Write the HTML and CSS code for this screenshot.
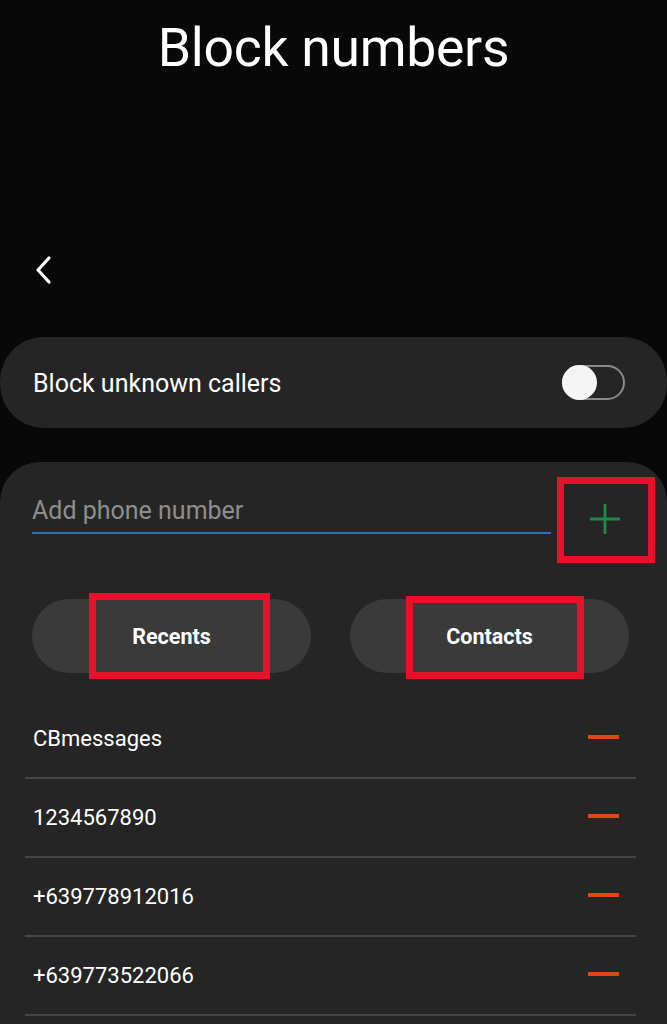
FILE: index.html
```html
<!DOCTYPE html>
<html lang="en">
<head>
<meta charset="utf-8">
<title>Block numbers</title>
<link rel="stylesheet" href="styles.css">
</head>
<body>
<div class="screen">
  <header class="header">
    <h1 class="title">Block numbers</h1>
  </header>
  <div class="nav">
    <svg class="back" width="20" height="30" viewBox="0 0 20 30"><path d="M15 3 L4 15 L15 27" fill="none" stroke="#fff" stroke-width="3.2" stroke-linecap="round" stroke-linejoin="round"/></svg>
  </div>
  <section class="card card-toggle">
    <span class="label">Block unknown callers</span>
    <span class="switch"><span class="knob"></span></span>
  </section>
  <section class="card card-list">
    <div class="input-row">
      <div class="input">Add phone number</div>
      <div class="add">
        <svg width="34" height="34" viewBox="0 0 34 34"><path d="M17 2 V32 M2 17 H32" stroke="#1d8a4a" stroke-width="2.8"/></svg>
        <span class="mark mark-add"></span>
      </div>
    </div>
    <div class="buttons">
      <div class="pill">Recents<span class="mark mark-recents"></span></div>
      <div class="pill">Contacts<span class="mark mark-contacts"></span></div>
    </div>
    <ul class="list">
      <li class="row"><span>CBmessages</span><span class="minus"></span></li>
      <li class="row"><span>1234567890</span><span class="minus"></span></li>
      <li class="row"><span>+639778912016</span><span class="minus"></span></li>
      <li class="row"><span>+639773522066</span><span class="minus"></span></li>
    </ul>
  </section>
</div>
</body>
</html>
```
FILE: styles.css
```css
html, body {
  margin: 0;
  padding: 0;
  background: #080808;
}
body {
  font-family: Roboto, "Noto Sans", sans-serif;
  color: #fff;
  width: 667px;
  height: 1024px;
  overflow: hidden;
}
.screen {
  display: flex;
  flex-direction: column;
}
.header {
  height: 100px;
  display: flex;
  justify-content: center;
}
.title {
  margin: 16px 0 0 0;
  font-size: 53.5px;
  line-height: 64px;
  font-weight: 400;
  letter-spacing: -0.3px;
}
.nav {
  height: 237px;
  display: flex;
  align-items: flex-start;
  padding-left: 34px;
  box-sizing: border-box;
  padding-top: 155px;
}
.card {
  background: #252525;
  border-radius: 44px;
}
.card-toggle {
  height: 91px;
  display: flex;
  align-items: center;
  justify-content: space-between;
  padding: 0 42px 0 33px;
  box-sizing: border-box;
}
.label {
  font-size: 25px;
  margin-top: 2px;
}
.switch {
  width: 63px;
  height: 35px;
  border: 2px solid #8a8a8a;
  border-radius: 18px;
  box-sizing: border-box;
  position: relative;
  display: flex;
  align-items: center;
}
.knob {
  width: 35px;
  height: 35px;
  border-radius: 50%;
  background: #f5f5f5;
  margin-left: -2px;
}
.card-list {
  margin-top: 34px;
  height: 600px;
  border-radius: 40px 40px 0 0;
  padding: 15px 31px 0 25px;
  box-sizing: border-box;
}
.input-row {
  display: flex;
  align-items: flex-start;
  padding-left: 7px;
}
.input {
  flex: 0 0 519px;
  height: 57px;
  box-sizing: border-box;
  border-bottom: 2px solid #2c6db3;
  color: #8e8e8e;
  font-size: 25px;
  line-height: 30px;
  padding-top: 19px;
}
.add {
  flex: 0 0 98px;
  height: 86px;
  margin-left: 6px;
  position: relative;
  display: flex;
  align-items: center;
  justify-content: center;
}
.add svg {
  margin-top: -2px;
  margin-left: -2px;
}
.mark {
  position: absolute;
  border: 7px solid #ea0f2b;
  box-sizing: border-box;
}
.mark-add {
  left: 0;
  top: 0;
  width: 98px;
  height: 86px;
}
.buttons {
  display: flex;
  gap: 39px;
  margin-top: 36px;
  padding-left: 7px;
}
.pill {
  width: 279px;
  height: 74px;
  border-radius: 37px;
  background: #3a3a3a;
  display: flex;
  align-items: center;
  justify-content: center;
  font-size: 21.5px;
  font-weight: 700;
  position: relative;
}
.mark-recents {
  left: 57px;
  top: -6px;
  width: 181px;
  height: 86px;
}
.mark-contacts {
  left: 56px;
  top: -3px;
  width: 178px;
  height: 83px;
}
.list {
  list-style: none;
  margin: 27px 0 0 0;
  padding: 0;
  width: 611px;
}
.row {
  height: 77px;
  border-bottom: 2px solid #454545;
  display: flex;
  align-items: center;
  justify-content: space-between;
  padding: 0 17px 0 8px;
  font-size: 22px;
}
.minus {
  width: 31px;
  height: 4px;
  background: #e2470f;
  margin-top: -4px;
}
```
